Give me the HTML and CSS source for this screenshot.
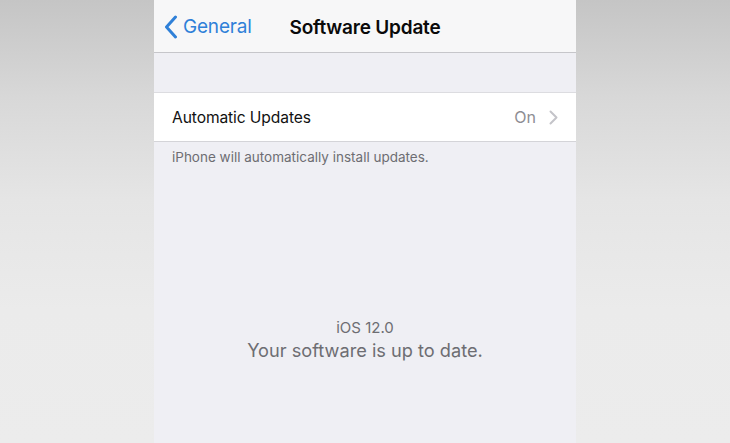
FILE: index.html
```html
<!DOCTYPE html>
<html>
<head>
<meta charset="utf-8">
<link rel="stylesheet" href="styles.css">
</head>
<body>
<div class="screen">
  <header class="nav">
    <div class="back">
      <svg class="back-chevron" width="14" height="24" viewBox="0 0 14 24"><path d="M11.5 2 L2.5 12 L11.5 22" fill="none" stroke="#2f80d8" stroke-width="3" stroke-linecap="round" stroke-linejoin="round"/></svg>
      <span class="back-label">General</span>
    </div>
    <div class="title">Software Update</div>
  </header>
  <div class="gap"></div>
  <div class="row">
    <span class="row-label">Automatic Updates</span>
    <span class="row-value">On</span>
    <svg class="row-chevron" width="9" height="15" viewBox="0 0 9 15"><path d="M1.5 1.5 L7.5 7.5 L1.5 13.5" fill="none" stroke="#c4c4c9" stroke-width="2" stroke-linecap="round" stroke-linejoin="round"/></svg>
  </div>
  <p class="footer">iPhone will automatically install updates.</p>
  <div class="status">
    <div class="version">iOS 12.0</div>
    <div class="uptodate">Your software is up to date.</div>
  </div>
</div>
</body>
</html>
```

FILE: styles.css
```css
html, body {
  margin: 0;
  padding: 0;
  height: 100%;
}
body {
  background: linear-gradient(to bottom, #c5c5c5 0%, #d8d8d8 22%, #e5e5e5 45%, #ebebeb 70%, #ececec 100%);
  display: flex;
  justify-content: center;
  font-family: Inter, "Noto Sans", sans-serif;
  overflow: hidden;
}
.screen {
  width: 422px;
  height: 443px;
  background: #efeff4;
  display: flex;
  flex-direction: column;
}
.nav {
  height: 52px;
  background: #f7f7f8;
  border-bottom: 1px solid #c6c6ca;
  display: flex;
  align-items: center;
  justify-content: center;
  position: relative;
}
.back {
  position: absolute;
  left: 10px;
  top: 0;
  height: 52px;
  display: flex;
  align-items: center;
  gap: 5px;
}
.back-chevron {
  display: block;
  margin-top: 1px;
}
.back-label {
  color: #2f80d8;
  font-size: 19px;
  letter-spacing: -0.2px;
}
.title {
  font-size: 19px;
  font-weight: 600;
  color: #0a0a0a;
  letter-spacing: -0.2px;
  margin-top: 2px;
}
.gap {
  height: 39px;
}
.row {
  height: 48px;
  background: #ffffff;
  border-top: 1px solid #dcdce0;
  border-bottom: 1px solid #d4d4d8;
  display: flex;
  align-items: center;
  padding: 0 18px 0 18px;
}
.row-label {
  font-size: 15.6px;
  color: #111;
  flex: 1;
  letter-spacing: -0.1px;
}
.row-value {
  font-size: 16px;
  color: #8e8e93;
  margin-right: 13px;
}
.row-chevron {
  display: block;
}
.footer {
  margin: 0;
  padding: 7px 18px 0 18px;
  font-size: 13.5px;
  color: #6d6d72;
}
.status {
  margin-top: 154px;
  text-align: center;
  color: #6d6d72;
}
.version {
  font-size: 15px;
  line-height: 18px;
}
.uptodate {
  font-size: 18.2px;
  line-height: 24px;
  margin-top: 1px;
}
```
